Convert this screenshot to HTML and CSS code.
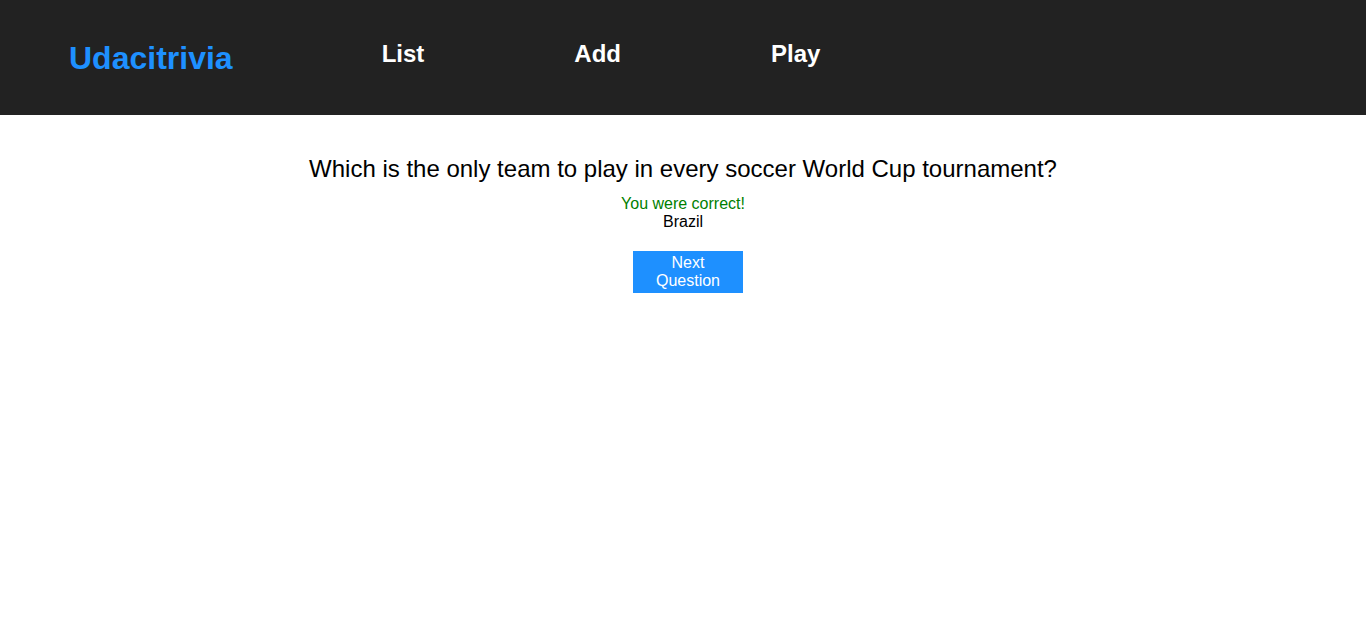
FILE: index.html
```html
<!DOCTYPE html>
<html>
<head>
<meta charset="utf-8">
<link rel="stylesheet" href="styles.css">
</head>
<body>
<header class="app-header">
  <h1 class="logo">Udacitrivia</h1>
  <nav class="nav">
    <h2 class="nav-item">List</h2>
    <h2 class="nav-item">Add</h2>
    <h2 class="nav-item">Play</h2>
  </nav>
</header>
<main class="quiz">
  <div class="quiz-question">Which is the only team to play in every soccer World Cup tournament?</div>
  <div class="quiz-result">You were correct!</div>
  <div class="quiz-answer">Brazil</div>
  <button class="next-button">Next Question</button>
</main>
</body>
</html>
```

FILE: styles.css
```css
html, body {
  margin: 0;
  padding: 0;
  background: #fff;
  font-family: "Liberation Sans", Arial, sans-serif;
}

.app-header {
  background: #222;
  height: 115px;
  display: flex;
  align-items: flex-start;
  padding-left: 69px;
  box-sizing: border-box;
}

.logo {
  margin: 38px 0 0 0;
  font-size: 32px;
  font-weight: bold;
  color: #1e90ff;
  line-height: 40px;
}

.nav {
  display: flex;
  margin-left: 149px;
  margin-top: 36px;
  gap: 150px;
}

.nav-item {
  margin: 0;
  font-size: 24px;
  font-weight: bold;
  color: #fff;
  line-height: 36px;
}

.quiz {
  display: flex;
  flex-direction: column;
  align-items: center;
  padding-top: 40px;
}

.quiz-question {
  font-size: 24px;
  line-height: 28px;
  color: #000;
  margin-bottom: 12px;
}

.quiz-result {
  font-size: 16px;
  line-height: 18px;
  color: #008000;
}

.quiz-answer {
  font-size: 16px;
  line-height: 18px;
  color: #000;
  margin-bottom: 20px;
}

.next-button {
  width: 110px;
  height: 42px;
  background: #1e90ff;
  color: #fff;
  border: none;
  font-family: "Liberation Sans", Arial, sans-serif;
  font-size: 16px;
  line-height: 18px;
  padding: 0 20px;
  margin-left: 10px;
}
```
